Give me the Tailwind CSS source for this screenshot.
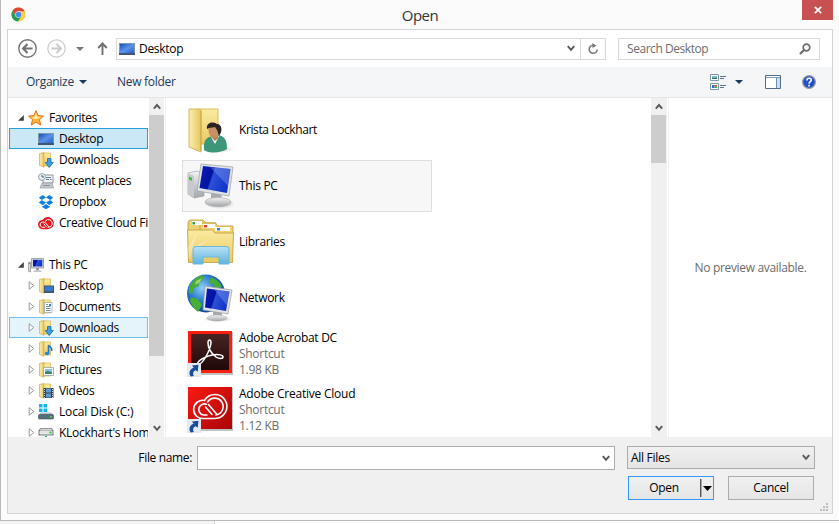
<!DOCTYPE html>
<html lang="en">
<head>
<meta charset="utf-8">
<title>Open</title>
<script src="https://cdn.jsdelivr.net/npm/@tailwindcss/browser@4"></script>
</head>
<body class="w-[839px] h-[524px] overflow-hidden bg-white font-['Open_Sans','Noto_Sans',sans-serif] text-[12px] leading-4 tracking-[-0.29px] text-black">
<svg class="absolute size-0">
  <defs>
    <linearGradient id="gold" x1="0" x2="1"><stop offset="0" stop-color="#fbeeb0"/><stop offset="1" stop-color="#e6c75f"/></linearGradient>
    <linearGradient id="goldv" x1="0" x2="0" y1="0" y2="1"><stop offset="0" stop-color="#fbeaa0"/><stop offset="1" stop-color="#e9ca62"/></linearGradient>
    <linearGradient id="scr" x1="0" x2="1" y1="0" y2=".3"><stop offset="0" stop-color="#0a1cb8"/><stop offset=".45" stop-color="#0414a0"/><stop offset=".5" stop-color="#2c50d8"/><stop offset="1" stop-color="#1234c8"/></linearGradient>
    <linearGradient id="desk" x1="0" x2="1" y1="0" y2="1"><stop offset="0" stop-color="#1c4fb0"/><stop offset=".5" stop-color="#5a94ea"/><stop offset="1" stop-color="#2a5fc4"/></linearGradient>
    <linearGradient id="metal" x1="0" x2="0" y1="0" y2="1"><stop offset="0" stop-color="#f4f4f4"/><stop offset="1" stop-color="#a2a6aa"/></linearGradient>
    <linearGradient id="blueg" x1="0" x2="0" y1="0" y2="1"><stop offset="0" stop-color="#b9e2f5"/><stop offset="1" stop-color="#5fb2dc"/></linearGradient>
    <linearGradient id="red" x1="0" x2="1" y1="0" y2="1"><stop offset="0" stop-color="#fb1a12"/><stop offset="1" stop-color="#a80508"/></linearGradient>
    <linearGradient id="dark" x1="0" x2="0" y1="0" y2="1"><stop offset="0" stop-color="#482423"/><stop offset="1" stop-color="#1f0808"/></linearGradient>
    <radialGradient id="globe" cx=".4" cy=".35" r=".7"><stop offset="0" stop-color="#8fd0f6"/><stop offset=".5" stop-color="#2a79cc"/><stop offset="1" stop-color="#0d3f8c"/></radialGradient>
    <radialGradient id="shade"><stop offset="0" stop-color="#888" stop-opacity=".6"/><stop offset="1" stop-color="#888" stop-opacity="0"/></radialGradient>
    <symbol id="desktop" viewBox="0 0 16 16"><path d="M0 2h16v12H0z" fill="#7e98b4"/><path d="M1 3h14v9H1z" fill="url(#desk)"/><path d="M0 12h16v2H0z" fill="#3e5678"/></symbol>
    <symbol id="folder" viewBox="0 0 16 16"><path d="M1.500 1.500 6 .5v14.800L1.500 13.500z" fill="url(#gold)" stroke="#d0ac48" stroke-width=".7"/><path d="M6 1h6.500v13H6z" fill="url(#goldv)" stroke="#d6b550" stroke-width=".7"/></symbol>
    <symbol id="downloads" viewBox="0 0 16 16"><use href="#folder"/><path d="M9.500 6.500h3.500v4h2.300L11.200 15.500 7.200 10.500h2.300z" fill="#3ba1e8" stroke="#1b69ae" stroke-width=".8"/></symbol>
    <symbol id="fdesktop" viewBox="0 0 16 16"><use href="#folder"/><path d="M6 7.500h10v7.500H6z" fill="#43566c"/><path d="M7 8.500h8v4.500H7z" fill="#3977d4"/></symbol>
    <symbol id="documents" viewBox="0 0 16 16"><use href="#folder"/><path d="M6.500 3.500h7.500v10H6.500z" fill="#fff" stroke="#9aa9b8" stroke-width=".8"/><path d="M8 5.500h2M8 7.500h4.500M8 9.500h4.500M8 11.500h4.500" stroke="#7893b5"/><path d="M11 5h2v2h-2z" fill="#3b82cc"/></symbol>
    <symbol id="music" viewBox="0 0 16 16"><use href="#folder"/><path d="M10.500 12V4c1 2.300 4.500 2.500 3 6" fill="none" stroke="#1d78c4" stroke-width="1.600"/><ellipse cx="9" cy="12.500" rx="2.200" ry="1.800" fill="#2189d8"/></symbol>
    <symbol id="pictures" viewBox="0 0 16 16"><use href="#folder"/><path d="M5.500 5.500h10v8h-10z" fill="#fff" stroke="#9aa3ab" stroke-width=".8"/><path d="M7 7h7v5H7z" fill="#83c3e8"/><path d="M7 12v-2l3-1 4 1.500V12z" fill="#3f7b66"/></symbol>
    <symbol id="videos" viewBox="0 0 16 16"><use href="#folder"/><path d="M5.500 5h10v10h-10z" fill="#39424c"/><path d="M8 5.500h5v4H8zM8 10.500h5v4H8z" fill="#5c9bd0"/><path d="M6.500 6v9M14.500 6v9" stroke="#dde" stroke-width=".9" stroke-dasharray="1 1"/></symbol>
    <symbol id="disk" viewBox="0 0 16 16"><path d="M1 0h3.500v3.500H1zM5.500 0H9v3.500H5.500zM1 4.500h3.500V8H1zM5.500 4.500H9V8H5.500z" fill="#10b5ef"/><path d="m2.500 8.500-2 3h15l-2-3z" fill="#b5bec5"/><rect x=".5" y="10.500" width="15" height="4.500" rx="1" fill="#536f7c" stroke="#3e5460" stroke-width=".6"/><path d="M12 12h2v1.500h-2z" fill="#4be04b"/></symbol>
    <symbol id="netdrive" viewBox="0 0 16 16"><path d="m2.500 3-2 2.500v5h15v-5l-2-2.500z" fill="#777d82"/><path d="M2.800 3.800h10.400l1 1.700H1.800z" fill="#d8dadc"/><rect x="1.500" y="5.800" width="13" height="3.700" rx="1" fill="#e4e5e6"/><path d="M11.500 6.500h2v2h-2z" fill="#34c834"/><path d="M7 11h2v5H7z" fill="#21b78a"/></symbol>
    <symbol id="star" viewBox="0 0 16 16"><path d="m8 .7 2.200 4.900 5.200.5-3.900 3.500 1.200 5.400L8 12.200 3.300 15l1.200-5.400L.6 6.100l5.200-.5z" fill="#fdb83a" stroke="#e0701f" stroke-linejoin="round"/><path d="m8 3 1.200 3.800 3 .3-3.900 2L4 8.200l2.800-1.800z" fill="#fff0a8"/></symbol>
    <symbol id="recent" viewBox="0 0 16 16"><path d="M5 2h10v8H5z" fill="#f1f3f5" stroke="#8e959c"/><path d="M8 4.500h5M8 6.500h3M12 6.500h1.500" stroke="#607c9a"/><path d="m4 10-2 5h13.500L14 10z" fill="#c5c9cd" stroke="#959ba1" stroke-width=".7"/><path d="M5 12.500h7" stroke="#8b9298"/><circle cx="4" cy="4" r="3.400" fill="#eef3f7" stroke="#98a3ac"/><path d="M4 2v2h2" fill="none" stroke="#466"/></symbol>
    <symbol id="dropbox" viewBox="0 0 16 16"><path d="m4.800 1 3.200 2.500L3.800 6 .8 3.700zM11.200 1 8 3.500 12.200 6l3-2.300zM3.800 6 8 8.600 4.800 11.300.8 8.500zM12.200 6 8 8.600l3.200 2.700 4-2.800zM4.200 12l.7.300L8 9.900l3.200 2.400.7-.3v1L8 15.300 4.200 13z" fill="#0c7fe5"/></symbol>
    <symbol id="ccbadge" viewBox="0 0 16 16"><path d="M9.800 14.200A6.100 6.100 0 1 0 4.600 4.800 4.700 4.700 0 1 0 4.800 14.200z" fill="#e31b21"/><g fill="none" stroke="#fff" stroke-linecap="round"><path d="M8.300 11.800 5.900 8.800M6.400 7.400A2.700 2.700 0 1 0 4.800 12.300H6.500" stroke-width="1"/><path d="M10.500 11.500 7.300 7.700M7.200 6.200A3.900 3.900 0 1 1 10 12.300" stroke-width="1"/></g></symbol>
    <symbol id="pc" viewBox="0 0 16 16"><path d="M.5 5.500 2.500 5v10l-2-.7z" fill="#ddd" stroke="#888" stroke-width=".7"/><path d="M1 6.500h1" stroke="#2b2"/><path d="M3.500 1.500h12v9.500h-12z" fill="#d5d8dc" stroke="#8f969e" stroke-width=".8"/><path d="M5 2.800h9.300v6.700H5z" fill="url(#scr)"/><path d="M8 11h3v2.500H8z" fill="#999"/><path d="M5.500 13.500h8v1.300h-8z" fill="#b6b8ba"/></symbol>
    <symbol id="closed" viewBox="0 0 7 9"><path d="M1.200 .7 5.800 4.500 1.200 8.300z" fill="#fff" stroke="#9b9b9b"/></symbol>
    <symbol id="opened" viewBox="0 0 6 6"><path d="M5.800 0v5.800H0z" fill="#404040"/></symbol>
    <symbol id="down" viewBox="0 0 8 7"><path d="m.8 1.200 3.200 3.600 3.200-3.600" fill="none" stroke="#5a5a5a" stroke-width="2"/></symbol>
    <symbol id="up" viewBox="0 0 8 7"><path d="m.8 5.600L4 2l3.200 3.600" fill="none" stroke="#5a5a5a" stroke-width="2"/></symbol>
    <symbol id="shortcut" viewBox="0 0 14 14"><path d="M0 0h14v14H0z" fill="#e6e9ee"/><path d="M3.600 13.500C1.300 9.500 3 5.800 6.700 4.800L5 2.500l6.500-.7L10.700 8.800 8.700 7.200C5.800 8.400 5.500 10.800 7 13z" fill="#164e9c"/></symbol>
  </defs>
</svg>

<div class="flex h-[521px] flex-col border-b border-l border-[#b9b9b9] bg-[#fbfbfb] pl-[6px]">
  <header class="flex h-[29px] items-start">
    <svg class="ml-[4px] mt-[7px] size-[15px]" viewBox="0 0 16 16"><circle cx="8" cy="8" r="7.500" fill="#fbcd42"/><path d="M1.500 4.200A7.500 7.500 0 0 1 14.600 4.500H8L4.800 9.500z" fill="#dd4436"/><path d="M1.500 4.200A7.500 7.500 0 0 0 7.500 15.500L11 9.800 8 11.500 4.900 9.800z" fill="#1a9f5c"/><circle cx="8" cy="8" r="3.500" fill="#dfe9f8"/><circle cx="8" cy="8" r="3" fill="#4b8af4"/></svg>
    <h1 class="mt-[5px] grow pl-3 text-center text-[15px] leading-5 tracking-[-0.5px] text-[#333]">Open</h1>
    <button class="mr-[6px] flex h-5 w-[31px] items-center justify-center bg-[#c75050]"><svg class="size-2" viewBox="0 0 8 8"><path d="m.8.800 6.400 6.400M7.200.800.800 7.200" stroke="#fff" stroke-width="1.700"/></svg></button>
  </header>

  <main class="flex h-[485px] w-[826px] flex-col border border-[#d3d3d3] bg-[#f0f0f0]">
    <nav class="flex h-[37px] items-center bg-white">
      <svg class="ml-[10px] size-[19px]" viewBox="0 0 19 19" fill="none" stroke="#747474"><circle cx="9.500" cy="9.500" r="8.700" stroke-width="1.400"/><path d="M14.500 9.500H5.500M9.500 5l-4.400 4.500L9.500 14" stroke-width="2.200"/></svg>
      <svg class="ml-[10px] size-[19px]" viewBox="0 0 19 19" fill="none" stroke="#cbcbcb"><circle cx="9.500" cy="9.500" r="8.700" stroke-width="1.200"/><path d="M4.500 9.500h9M9.500 5l4.400 4.500L9.500 14" stroke-width="2"/></svg>
      <svg class="ml-[10px] h-1 w-2" viewBox="0 0 8 4"><path d="M0 0h8L4 4z" fill="#777"/></svg>
      <svg class="ml-[13px] h-[13px] w-[11px]" viewBox="0 0 11 13"><path d="M5.500 13V1.500M1.200 6l4.300-4.500L9.800 6" fill="none" stroke="#707070" stroke-width="1.900"/></svg>
      <div class="ml-[8px] flex h-[22px] w-[490px] items-center border border-[#d9d9d9]">
        <svg class="ml-[2px] size-4"><use href="#desktop"/></svg>
        <span class="ml-[4px] grow">Desktop</span>
        <svg class="mr-[5px] h-[7px] w-2"><use href="#down"/></svg>
        <span class="flex h-5 w-[25px] items-center justify-center border-l border-[#d9d9d9]"><svg class="size-3" viewBox="0 0 12 12"><path d="M6 2.300A4 4 0 1 0 10.200 6.500" fill="none" stroke="#777" stroke-width="1.600"/><path d="M5.500 0v5l4-2.300z" fill="#777"/></svg></span>
      </div>
      <div class="ml-[12px] flex h-[22px] w-[202px] items-center border border-[#d9d9d9] pl-[8px] text-[#6d6d6d]">
        <span class="grow tracking-[-0.45px]">Search Desktop</span>
        <svg class="mr-[8px] size-3" viewBox="0 0 12 12" fill="none" stroke="#6d6d6d"><circle cx="7.500" cy="4.500" r="3.300" stroke-width="1.700"/><path d="M5 7 1 11" stroke-width="2.300"/></svg>
      </div>
    </nav>

    <div class="flex h-[31px] items-center border-b border-[#e5e6e7] bg-[#f5f6f7] text-[#1e395b]">
      <span class="ml-[18px] w-[48px]">Organize</span>
      <svg class="ml-[5px] h-1 w-2" viewBox="0 0 8 4"><path d="M0 0h8L4 4z" fill="#1e395b"/></svg>
      <span class="ml-[30px] grow">New folder</span>
      <svg class="h-4 w-4" viewBox="0 0 16 16"><path d="M.5.500h8v6h-8zM.5 9.500h8v6h-8z" fill="#fff" stroke="#8097ab"/><path d="M2 2h5v1.500H2z" fill="#7cc4e8"/><path d="M2 3.500h5V5H2z" fill="#297764"/><path d="M2 11h2.500v3H2z" fill="#2d70c9"/><path d="M4.500 11H7v1.500H4.500z" fill="#d9403a"/><path d="M4.500 12.500H7V14H4.500z" fill="#37a34a"/><path d="M10 2.500h6M10 4.500h4M10 11.500h6M10 13.500h4" stroke="#62748a"/></svg>
      <svg class="ml-[9px] h-1 w-2" viewBox="0 0 8 4"><path d="M0 0h8L4 4z" fill="#1e395b"/></svg>
      <svg class="ml-[22px] h-[14px] w-4" viewBox="0 0 16 14"><path d="M.5.500h15v13H.5z" fill="#fff" stroke="#4f6c8a"/><path d="M1 2.500h14" stroke="#7f9ab3"/><path d="M11.500 3h3.500v10h-3.500z" fill="#c9def0"/><path d="M11.500 3v10" stroke="#7290ac"/></svg>
      <svg class="ml-[21px] mr-[16px] size-[14px]" viewBox="0 0 14 14"><circle cx="7" cy="7" r="6.400" fill="#2451c8" stroke="#9a9da8" stroke-width="1.200"/><path d="M4.800 5.500C4.800 2.500 9.400 2.700 9.300 5.100 9.300 6.600 7.200 6.500 7 8.600M7 9.700v1.700" fill="none" stroke="#fff" stroke-width="1.600"/></svg>
    </div>

    <section class="flex h-[339px] overflow-hidden bg-white">
      <aside class="w-[141px] shrink-0 overflow-hidden whitespace-nowrap pl-px pt-[9px] [&>div]:flex [&>div]:h-[21px] [&>div]:items-center">
        <div><svg class="ml-[9px] size-[6px]"><use href="#opened"/></svg><svg class="ml-[4px] size-4"><use href="#star"/></svg><span class="ml-[5px]">Favorites</span></div>
        <div class="w-[139px] border border-[#26a0da] bg-[#cbe8f6]"><svg class="ml-[28px] size-4 shrink-0"><use href="#desktop"/></svg><span class="ml-[5px]">Desktop</span></div>
        <div><svg class="ml-[29px] size-4 shrink-0"><use href="#downloads"/></svg><span class="ml-[5px]">Downloads</span></div>
        <div><svg class="ml-[29px] size-4 shrink-0"><use href="#recent"/></svg><span class="ml-[5px] tracking-[-0.35px]">Recent places</span></div>
        <div><svg class="ml-[29px] size-4 shrink-0"><use href="#dropbox"/></svg><span class="ml-[5px]">Dropbox</span></div>
        <div class="w-[139px] overflow-hidden"><svg class="ml-[29px] size-4 shrink-0"><use href="#ccbadge"/></svg><span class="ml-[5px]">Creative Cloud Files</span></div>
        <div></div>
        <div><svg class="ml-[9px] size-[6px]"><use href="#opened"/></svg><svg class="ml-[4px] size-4"><use href="#pc"/></svg><span class="ml-[5px]">This PC</span></div>
        <div><svg class="ml-[19px] h-[9px] w-[7px]"><use href="#closed"/></svg><svg class="ml-[3px] size-4"><use href="#fdesktop"/></svg><span class="ml-[5px]">Desktop</span></div>
        <div><svg class="ml-[19px] h-[9px] w-[7px]"><use href="#closed"/></svg><svg class="ml-[3px] size-4"><use href="#documents"/></svg><span class="ml-[5px]">Documents</span></div>
        <div class="w-[139px] border border-[#70c0e7] bg-[#e5f3fb]"><svg class="ml-[18px] h-[9px] w-[7px]"><use href="#closed"/></svg><svg class="ml-[3px] size-4"><use href="#downloads"/></svg><span class="ml-[5px]">Downloads</span></div>
        <div><svg class="ml-[19px] h-[9px] w-[7px]"><use href="#closed"/></svg><svg class="ml-[3px] size-4"><use href="#music"/></svg><span class="ml-[5px]">Music</span></div>
        <div><svg class="ml-[19px] h-[9px] w-[7px]"><use href="#closed"/></svg><svg class="ml-[3px] size-4"><use href="#pictures"/></svg><span class="ml-[5px]">Pictures</span></div>
        <div><svg class="ml-[19px] h-[9px] w-[7px]"><use href="#closed"/></svg><svg class="ml-[3px] size-4"><use href="#videos"/></svg><span class="ml-[5px]">Videos</span></div>
        <div><svg class="ml-[19px] h-[9px] w-[7px]"><use href="#closed"/></svg><svg class="ml-[3px] size-4"><use href="#disk"/></svg><span class="ml-[5px] tracking-[-0.15px]">Local Disk (C:)</span></div>
        <div class="w-[139px] overflow-hidden"><svg class="ml-[19px] h-[9px] w-[7px] shrink-0"><use href="#closed"/></svg><svg class="ml-[3px] size-4 shrink-0"><use href="#netdrive"/></svg><span class="ml-[5px]">KLockhart's Home</span></div>
      </aside>
      <div class="flex w-[15px] shrink-0 flex-col items-center bg-[#f0f0f0]">
        <div class="flex h-[17px] items-center"><svg class="h-[7px] w-2"><use href="#up"/></svg></div>
        <div class="h-[241px] w-[15px] self-start bg-[#cdcdcd]"></div>
        <div class="grow"></div>
        <div class="flex h-[17px] items-center"><svg class="h-[7px] w-2"><use href="#down"/></svg></div>
      </div>
      <div class="ml-px w-px shrink-0 bg-[#f0f0f0]"></div>

      <div class="w-[485px] shrink-0 pl-[16px] pt-[4px] [&>div]:flex [&>div]:h-14 [&>div]:items-center">
        <div><svg class="ml-[5px] size-12" viewBox="0 0 48 48"><ellipse cx="31" cy="43" rx="15" ry="4" fill="url(#shade)"/><path d="M11 3h20v35H11z" fill="url(#goldv)" stroke="#dabe63"/><path d="M2 3h9l3 1v42L2 41z" fill="url(#gold)" stroke="#d6b95c"/><path d="M14 5v40" stroke="#c9a74b"/><path d="M17 44c-1-9 2-13 9-14l5-1c6 1 9 4 9 14-6 4-17 5-23 1z" fill="#3d9677"/><path d="m24 31 4 7 4-8z" fill="#fff"/><path d="M24 28h7v4l-3 3-4-4z" fill="#b67d53"/><ellipse cx="27" cy="24.500" rx="5.500" ry="7.500" fill="#c98f65"/><path d="M20 23c-1-6 5-8 10-5 5 0 6 7 2 12l-2-6-2-3c-3 1-5 0-8 2z" fill="#29241f"/></svg><span class="ml-[4px] tracking-[-0.4px]">Krista Lockhart</span></div>
        <div><div class="flex h-[52px] w-[250px] items-center border border-[#dedede] bg-[#f7f7f7]"><svg class="ml-[4px] size-12" viewBox="0 0 48 48"><ellipse cx="33" cy="42" rx="15" ry="5" fill="url(#shade)"/><path d="m1 11 9-2 7 3v22L7 36l-6-4z" fill="url(#metal)" stroke="#999" stroke-width=".6"/><path d="m1 11 6 3v22l-6-4z" fill="#c7cacc"/><path d="M2 14.500 5 16v3l-3-1.500z" fill="#31c728"/><path d="M24 30h10l1 9H24z" fill="#a6acb1"/><ellipse cx="31" cy="40" rx="13" ry="4.500" fill="url(#metal)" stroke="#aaa" stroke-width=".6"/><path d="m14 2 32 3-4 29-32-5z" fill="#e0e3e6" stroke="#989fa6" stroke-width=".7"/><path d="m16 4 27.500 3-3.500 24-27.500-5z" fill="url(#scr)"/><path d="m23 5 20.500 2-2.500 17z" fill="#87a8ee" opacity=".4"/></svg><span class="ml-[4px]">This PC</span></div></div>
        <div><svg class="ml-[4px] h-12 w-[49px]" viewBox="0 0 49 48"><path d="M2 5q0-3 3-3h12l3 3h10v10H2z" fill="#eed272" stroke="#c9a74b"/><path d="M14 7q0-2 2-2h13l3 3h15v10H14z" fill="#eed272" stroke="#c9a74b"/><path d="M6 3h10v4H6zM17 6h12v4H17zM29 9h15v4H29z" fill="#fff"/><path d="M6.500 4H9v2.500H6.500z" fill="#29a044"/><path d="M18 7h3v2.500h-3z" fill="#e34128"/><path d="M31 10h3v2.500h-3z" fill="#3586d0"/><path d="M1.500 12H26l3 3h18.500l-1 29.500H2.500z" fill="url(#goldv)" stroke="#cda94d"/><path d="m2 29 9-14-4 14 15-7-13 10 8 6-11-4-3 8z" fill="#fff" opacity=".3"/><path d="M7 46V31q0-2.500 3-2.500h30q3 0 3 2.500v15H33v-7H17v7z" fill="url(#blueg)" stroke="#6bb7dc"/></svg><span class="ml-[4px]">Libraries</span></div>
        <div><svg class="ml-[4px] h-12 w-[49px]" viewBox="0 0 49 48"><ellipse cx="32" cy="45" rx="15" ry="3" fill="url(#shade)"/><circle cx="20" cy="19.500" r="19" fill="url(#globe)"/><path d="M8 6q5-5 10-4l-2 5-4 1 1 4-5 2-2 6-3-1q-1-7 5-13zM5 23l7 2 4 6-4 7Q7 34 4 27zM25 3q8 3 11 10l-6 2-3-5-4-1z" fill="#48ad35"/><path d="m10 7 6-3-2 4-5 3z" fill="#9bdc61"/><path d="M27 36h9v8h-9z" fill="#a5acb2"/><ellipse cx="31" cy="44" rx="10" ry="3" fill="url(#metal)" stroke="#aaa" stroke-width=".5"/><path d="m19 12 27 4-4 24-25-4z" fill="#e0e3e6" stroke="#969da4" stroke-width=".7"/><path d="m21 14.500 22.500 3-3.500 19.500-21-3.500z" fill="url(#scr)"/><path d="m28 15.500 15.500 2-2.500 14z" fill="#87a8ee" opacity=".4"/></svg><span class="ml-[4px]">Network</span></div>
        <div><svg class="ml-[4px] h-12 w-[49px]" viewBox="0 0 49 48"><path d="M3 2h44v43H3z" fill="#777" opacity=".45"/><path d="M2 1h44v42H2z" fill="#f5200f"/><path d="M5 4h38v36H5z" fill="url(#dark)"/><path transform="translate(0 -2)" d="M12 36c-2-3 9-8 14-9 7-1 11 0 11 2s-4 2-7 0c-5-4-8-9-8-14 0-4 3-4 3 0-1 7-8 22-13 21z" fill="none" stroke="#fff" stroke-width="1.500"/><use href="#shortcut" x="1" y="33" width="14" height="14"/></svg><span class="ml-[4px] leading-4">Adobe Acrobat DC<br><span class="text-[#6d6d6d]">Shortcut<br>1.98 KB</span></span></div>
        <div><svg class="ml-[4px] h-12 w-[49px]" viewBox="0 0 49 48"><path d="M3 2h44v43H3z" fill="#777" opacity=".45"/><path d="M2 1h44v42H2z" fill="url(#red)"/><g fill="none" stroke="#fff" stroke-linecap="round"><path d="M29 32.500A12 12 0 1 0 18.500 14.500 9.100 9.100 0 1 0 17.500 32.500z" stroke-width="1.600"/><path d="M26 28.500 19.500 21M20.500 18.300A5.600 5.600 0 1 0 17.500 29H21" stroke-width="1.600"/><path d="M31 28.500 22.500 18.500M21.500 16A8.500 8.500 0 1 1 30 29" stroke-width="1.600"/></g><use href="#shortcut" x="1" y="33" width="14" height="14"/></svg><span class="ml-[4px] leading-4"><span class="tracking-[-0.23px]">Adobe Creative Cloud</span><br><span class="text-[#6d6d6d]">Shortcut<br>1.12 KB</span></span></div>
      </div>
      <div class="flex w-[16px] shrink-0 flex-col items-center bg-[#f0f0f0]">
        <div class="mr-px flex h-[17px] items-center"><svg class="h-[7px] w-2"><use href="#up"/></svg></div>
        <div class="h-[48px] w-[15px] self-start bg-[#cdcdcd]"></div>
        <div class="grow"></div>
        <div class="mr-px flex h-[17px] items-center"><svg class="h-[7px] w-2"><use href="#down"/></svg></div>
      </div>
      <div class="ml-px w-px shrink-0 bg-[#f0f0f0]"></div>
      <div class="flex grow items-center justify-center text-[#6d6d6d] tracking-[-0.33px]">No preview available.</div>
    </section>

    <footer class="flex grow flex-col pt-[9px]">
      <div class="flex items-start">
        <label class="mt-[4px] w-[189px] pr-[5px] text-right tracking-[-0.35px]">File name:</label>
        <div class="flex h-6 w-[418px] items-center justify-end border border-[#abadb3] bg-white pr-[4px]"><svg class="h-[7px] w-2"><use href="#down"/></svg></div>
        <div class="ml-[12px] flex h-[23px] w-[188px] items-center justify-between border border-[#acacac] bg-linear-to-b from-[#f0f0f0] to-[#e5e5e5] pl-[3px] pr-[4px]"><span>All Files</span><svg class="h-[7px] w-2"><use href="#down"/></svg></div>
      </div>
      <div class="mt-[6px] flex">
        <button class="ml-[620px] flex h-6 w-[86px] items-center border border-[#3399ff] bg-linear-to-b from-[#f0f0f0] to-[#e5e5e5]"><span class="w-[70px] text-center">Open</span><span class="ml-px h-[18px] w-[2px] border-l border-[#555] bg-[#aaa]"></span><svg class="ml-px h-[5px] w-[9px]" viewBox="0 0 9 5"><path d="M0 0h9L4.500 5z"/></svg></button>
        <button class="ml-[14px] h-6 w-[86px] border border-[#acacac] bg-linear-to-b from-[#f0f0f0] to-[#e5e5e5]">Cancel</button>
      </div>
      <svg class="mr-[4px] mt-[3px] size-2 self-end" viewBox="0 0 8 8"><path d="M6 0h2v2H6zM3 3h2v2H3zM6 3h2v2H6zM0 6h2v2H0zM3 6h2v2H3zM6 6h2v2H6z" fill="#bdbdbd"/></svg>
    </footer>
  </main>
</div>
<div class="h-[3px] w-[215px] border-r border-[#d0d0d0] bg-[#f3f3f3]"></div>
</body>
</html>
